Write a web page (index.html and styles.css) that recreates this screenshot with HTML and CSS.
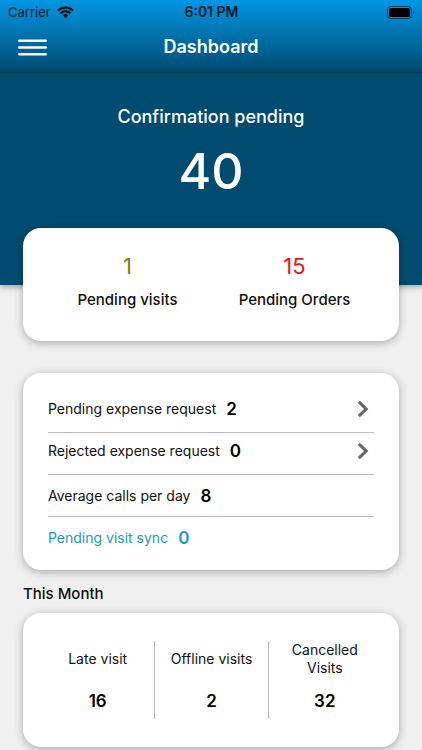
FILE: index.html
```html
<!DOCTYPE html>
<html lang="en">
<head>
<meta charset="utf-8">
<meta name="viewport" content="width=device-width, initial-scale=1">
<title>Dashboard</title>
<link rel="stylesheet" href="styles.css">
</head>
<body>
<header class="top">
  <div class="status">
    <div class="carrier">
      <span>Carrier</span>
      <svg class="wifi" viewBox="0 0 17 12" aria-hidden="true">
        <path d="M1 4.6a10.6 10.6 0 0 1 15 0M3.7 7.3a6.8 6.8 0 0 1 9.6 0" fill="none" stroke="currentColor" stroke-width="2.1"/>
        <path d="M5.8 9.3a3.9 3.9 0 0 1 5.4 0L8.5 12z" fill="currentColor"/>
      </svg>
    </div>
    <span class="clock">6:01 PM</span>
    <svg class="battery" viewBox="0 0 28 13" aria-hidden="true">
      <rect x="0.5" y="0.5" width="24" height="12" rx="3.5" fill="none" stroke="#000" stroke-opacity=".45"/>
      <rect x="2" y="2" width="21" height="9" rx="2" fill="#000"/>
      <path d="M26 4.5c1.7.6 1.7 3.4 0 4z" fill="#000" fill-opacity=".5"/>
    </svg>
  </div>
  <div class="nav">
    <button class="menu" type="button" aria-label="Menu">
      <svg viewBox="0 0 29 17" aria-hidden="true">
        <path d="M1.3 1.8h26.4M1.3 8.5h26.4M1.3 15.2h26.4" stroke="#fff" stroke-width="2.5" stroke-linecap="round"/>
      </svg>
    </button>
    <h1>Dashboard</h1>
  </div>
</header>
<main>
  <section class="hero">
    <h2>Confirmation pending</h2>
    <p class="total">40</p>
  </section>
  <div class="content">
    <section class="card pending">
      <div class="pending-item">
        <span class="count olive">1</span>
        <span class="label">Pending visits</span>
      </div>
      <div class="pending-item">
        <span class="count red">15</span>
        <span class="label">Pending Orders</span>
      </div>
    </section>
    <section class="card list">
      <a class="row linked" href="#pending-expenses">
        <span>Pending expense request</span><strong>2</strong>
        <svg class="chevron" viewBox="0 0 12 18" aria-hidden="true"><path d="M1.8 1.8 9.2 9l-7.4 7.2" fill="none" stroke="#666" stroke-width="3"/></svg>
      </a>
      <a class="row linked" href="#rejected-expenses">
        <span>Rejected expense request</span><strong>0</strong>
        <svg class="chevron" viewBox="0 0 12 18" aria-hidden="true"><path d="M1.8 1.8 9.2 9l-7.4 7.2" fill="none" stroke="#666" stroke-width="3"/></svg>
      </a>
      <div class="row"><span>Average calls per day</span><strong>8</strong></div>
      <a class="row sync" href="#sync"><span>Pending visit sync</span><strong>0</strong></a>
    </section>
    <h3>This Month</h3>
    <section class="card month">
      <div class="stat"><span class="stat-label">Late visit</span><strong>16</strong></div>
      <div class="stat"><span class="stat-label">Offline visits</span><strong>2</strong></div>
      <div class="stat"><span class="stat-label">Cancelled Visits</span><strong>32</strong></div>
    </section>
  </div>
</main>
</body>
</html>
```
FILE: styles.css
```css
* {
  box-sizing: border-box;
}

body {
  margin: 0;
  background: #f0f0f0;
  color: #111;
  font-family: Inter, "Liberation Sans", sans-serif;
  font-size: 14px;
  line-height: 18px;
}

h1, h2, h3, p {
  margin: 0;
}

a {
  color: inherit;
  text-decoration: none;
}

.top {
  background: linear-gradient(#0096e4, #004b70);
  border-bottom: 1px solid #00405f;
}

.status {
  display: grid;
  grid-template-columns: 1fr auto 1fr;
  align-items: center;
  height: 24px;
  padding: 0 7px 0 8px;
  color: #051a28;
  font-size: 13px;
}

.carrier {
  display: flex;
  align-items: center;
  gap: 6px;
}

.wifi {
  width: 17px;
  height: 12px;
  color: #000;
}

.clock {
  font-size: 14px;
  font-weight: 600;
}

.battery {
  justify-self: end;
  width: 28px;
  height: 13px;
}

.nav {
  display: grid;
  grid-template-columns: 1fr auto 1fr;
  align-items: center;
  height: 48px;
  padding: 0 18px 2px;
}

.menu {
  display: flex;
  justify-self: start;
  padding: 0;
  border: 0;
  background: none;
}

.menu svg {
  width: 29px;
  height: 17px;
}

h1 {
  color: #fff;
  font-size: 18px;
  font-weight: 600;
  line-height: 24px;
}

.hero {
  padding: 32px 16px 85px;
  background: #004b70;
  box-shadow: 0 2px 6px rgb(0 0 0 / 35%);
  color: #fff;
  text-align: center;
}

h2 {
  font-size: 18px;
  font-weight: 500;
  line-height: 24px;
}

.total {
  margin-top: 13px;
  font-size: 50px;
  font-weight: 500;
  line-height: 58px;
}

.content {
  margin-top: -57px;
  padding: 0 23px 3px;
}

.card {
  position: relative;
  border-radius: 18px;
  background: #fff;
  box-shadow: 0 2px 8px rgb(0 0 0 / 30%);
}

.pending {
  display: grid;
  grid-template-columns: 1fr 1fr;
  padding: 24px 21px 32px;
  text-align: center;
}

.pending-item {
  display: flex;
  flex-direction: column;
  gap: 10px;
}

.count {
  font-size: 22px;
  line-height: 28px;
}

.olive {
  color: #7f7f10;
}

.red {
  color: #e81515;
}

.label {
  font-size: 15px;
  font-weight: 500;
  line-height: 19px;
}

.list {
  margin-top: 32px;
  padding: 18px 25px 11px;
}

.row {
  display: flex;
  align-items: center;
  gap: 10px;
  height: 42px;
  border-bottom: 1px solid #bbb;
}

.row:last-child {
  border-bottom: 0;
}

.row strong,
.stat strong {
  color: #000;
  font-size: 17px;
  font-weight: 600;
}

.linked {
  padding-bottom: 5px;
}

.chevron {
  width: 12px;
  height: 18px;
  margin-left: auto;
  margin-right: 5px;
}

.sync,
.sync strong {
  color: #2399c4;
}

h3 {
  margin: 15px 0 10px;
  font-size: 15px;
  font-weight: 500;
  line-height: 18px;
}

.month {
  display: grid;
  grid-template-columns: repeat(3, 1fr);
  padding: 28px 18px;
  text-align: center;
}

.stat {
  display: flex;
  flex-direction: column;
  gap: 15px;
  height: 78px;
  padding: 0 12px;
}

.stat + .stat {
  border-left: 1px solid #bbb;
}

.stat-label {
  display: flex;
  align-items: center;
  justify-content: center;
  height: 36px;
}
```
